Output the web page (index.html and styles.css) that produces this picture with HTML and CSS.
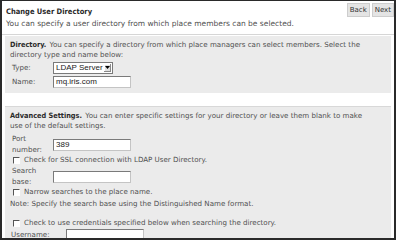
FILE: index.html
```html
<!DOCTYPE html>
<html>
<head>
<meta charset="utf-8">
<link rel="stylesheet" href="styles.css">
</head>
<body>
<div class="frame">
  <div class="header">
    <div class="head-text">
      <div class="title">Change User Directory</div>
      <div class="sub">You can specify a user directory from which place members can be selected.</div>
    </div>
    <div class="buttons">
      <span class="btn">Back</span><span class="btn">Next</span>
    </div>
  </div>
  <div class="panel p1">
    <p class="lead"><b>Directory.</b> You can specify a directory from which place managers can select members. Select the directory type and name below:</p>
    <div class="row r-type">
      <span class="lbl">Type:</span>
      <span class="select"><span class="sel-text">LDAP Server</span><span class="arrow"><svg width="5" height="4" viewBox="0 0 5 4"><path d="M0 0h5L2.5 3z" fill="#000"/></svg></span></span>
    </div>
    <div class="row r-name">
      <span class="lbl">Name:</span>
      <span class="input">mq.iris.com</span>
    </div>
  </div>
  <div class="panel p2">
    <p class="lead"><b>Advanced Settings.</b> You can enter specific settings for your directory or leave them blank to make use of the default settings.</p>
    <div class="row two r-port">
      <span class="lbl">Port<br>number:</span>
      <span class="input">389</span>
    </div>
    <div class="check"><span class="box"></span>Check for SSL connection with LDAP User Directory.</div>
    <div class="row two r-base">
      <span class="lbl">Search<br>base:</span>
      <span class="input"></span>
    </div>
    <div class="check"><span class="box"></span>Narrow searches to the place name.</div>
    <div class="note">Note: Specify the search base using the Distinguished Name format.</div>
    <div class="check c2"><span class="box"></span>Check to use credentials specified below when searching the directory.</div>
    <div class="row r-user">
      <span class="lbl wide">Username:</span>
      <span class="input"></span>
    </div>
  </div>
</div>
</body>
</html>
```
FILE: styles.css
```css
html, body { margin: 0; padding: 0; background: #fff; }
body { font-family: "DejaVu Sans", Verdana, sans-serif; font-size: 7.5px; color: #505050; }
.frame {
  width: 396px; height: 240px; box-sizing: border-box;
  border-left: 2px solid #2a2a2a; border-right: 2px solid #2a2a2a;
  border-top: 1px solid #2a2a2a; border-bottom: 2px solid #2a2a2a;
  overflow: hidden;
}
.header { display: flex; justify-content: space-between; padding: 2px 0 0 4px; height: 31px; border-bottom: 1px solid #d6d6d6; }
.head-text { padding-top: 3px; }
.title { font-family: "DejaVu Sans Condensed", "DejaVu Sans", sans-serif; font-weight: bold; color: #2a2a2a; line-height: 12px; }
.sub { line-height: 12px; }
.buttons { display: flex; gap: 2px; }
.btn { background: #e4e4e4; border: 1px solid #cdcdcd; color: #333; font-size: 7px; height: 12px; line-height: 12px; padding: 0 2px; }
.panel { background: #ebebeb; margin: 1px 3px 0 3px; padding: 4px 9px 5px 5px; font-size: 7.1px; }
.p2 { margin-top: 13px; border-top: 1px solid #d8d8d8; padding: 4px 16px 5px 5px; height: 140px; }
.lead { margin: 0; line-height: 10px; }
.lead b { font-family: "DejaVu Sans Condensed", "DejaVu Sans", sans-serif; color: #2a2a2a; font-size: 7.3px; margin-right: 1px; }
.row { display: flex; align-items: center; margin-top: 2px; }
.r-port { margin-top: 3px; }
.r-base { margin-top: 1px; }
.r-user { margin-top: 1px; }
.lbl { width: 41px; padding-left: 2px; line-height: 10.5px; flex: none; }
.lbl.wide { width: 55px; padding-left: 1px; }
.input { display: inline-block; width: 74px; height: 10px; background: #fff; border: 1px solid #7a7a7a; border-right-color: #c4c4c4; border-bottom-color: #c4c4c4; font-family: "Liberation Sans", Arial, sans-serif; font-size: 8px; line-height: 10px; padding-left: 2px; color: #222; }
.select { display: inline-flex; width: 58px; height: 10px; background: #fff; border: 1px solid #7a7a7a; font-family: "Liberation Sans", Arial, sans-serif; font-size: 8px; line-height: 10px; color: #222; justify-content: space-between; white-space: nowrap; }
.sel-text { padding-left: 2px; }
.arrow { width: 9px; height: 8px; margin: 1px; background: #e0e0e0; box-shadow: inset -1px -1px #888, inset 1px 1px #fff; display: flex; align-items: center; justify-content: center; }
.check { display: flex; align-items: center; padding-left: 3px; line-height: 10px; }
.box { width: 5px; height: 5px; border-left: 1px solid #555; border-top: 1px solid #555; border-right: 1px solid #fff; border-bottom: 1px solid #fff; background: #fff; margin-right: 4px; }
.note { margin-top: 2px; line-height: 10px; }
.c2 { margin-top: 9px; }
```
